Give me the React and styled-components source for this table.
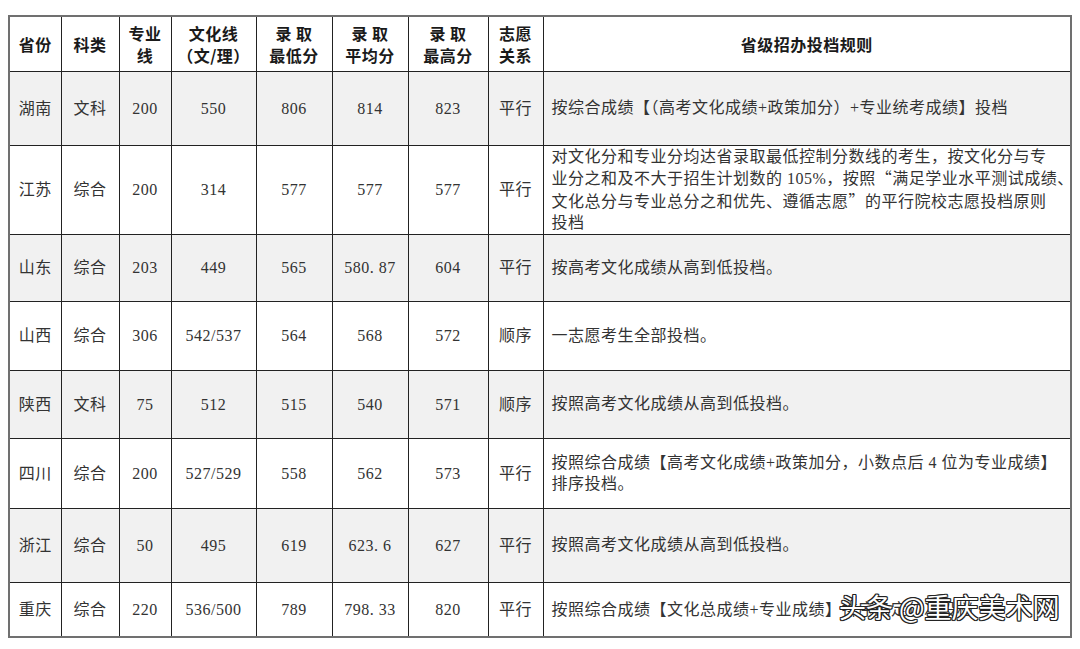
import React from "react";
import styled, { createGlobalStyle } from "styled-components";

const Global = createGlobalStyle`
  html, body { margin: 0; padding: 0; background: #ffffff; }
  body { font-family: "Liberation Serif", "Noto Sans CJK SC", serif; }
`;

const Page = styled.div`
  position: relative;
  width: 1080px;
  height: 649px;
  padding: 15px 10px 0 8px;
  box-sizing: border-box;
  background: #fff;
`;

const Table = styled.table`
  width: 1062px;
  table-layout: fixed;
  border-collapse: collapse;
  border: 2px solid #707070;
  font-size: 16px;
  letter-spacing: 0.5px;
  color: #333;
`;

const HeadRow = styled.tr`
  height: 55px;
`;

const Th = styled.th`
  border: 1px solid #222;
  font-weight: 700;
  color: #1a1a1a;
  text-align: center;
  vertical-align: middle;
  line-height: 22px;
  padding: 0;
  font-family: "Noto Sans CJK SC", sans-serif;
`;

const Row = styled.tr`
  background: ${(p) => (p.$shade ? "#f1f1f1" : "#ffffff")};
  height: ${(p) => p.$h}px;
`;

const Td = styled.td`
  border: 1px solid #222;
  text-align: center;
  vertical-align: middle;
  padding: 0;
  line-height: 21px;
  white-space: nowrap;
`;

const RuleTd = styled(Td)`
  text-align: left;
  padding: 0 2px 0 8px;
  line-height: 21.5px;
`;

const Line = styled.span`
  display: block;
  white-space: nowrap;
`;

const Cjk = styled.span`
  font-family: "Noto Sans CJK SC", sans-serif;
`;

const Watermark = styled.div`
  position: absolute;
  left: 839px;
  top: 588px;
  font-family: "Noto Sans CJK SC", sans-serif;
  font-size: 27px;
  line-height: 38px;
  color: #ffffff;
  letter-spacing: 0;
  white-space: pre;
  text-shadow: 1px 1px 0 #222, -1px -1px 0 #222, 1px -1px 0 #222, -1px 1px 0 #222,
    0 1px 0 #222, 0 -1px 0 #222, 1px 0 0 #222, -1px 0 0 #222;
`;

const cols = [52, 58, 52, 85, 76, 76, 80, 55, 528];

const rows = [
  { p: "湖南", k: "文科", z: "200", w: "550", lo: "806", avg: "814", hi: "823", rel: "平行",
    rule: [["按综合成绩【（高考文化成绩+政策加分）+专业统考成绩】投档"]], h: 74, shade: true },
  { p: "江苏", k: "综合", z: "200", w: "314", lo: "577", avg: "577", hi: "577", rel: "平行",
    rule: [
      ["对文化分和专业分均达省录取最低控制分数线的考生，按文化分与专"],
      ["业分之和及不大于招生计划数的 105%，按照", { q: "“" }, "满足学业水平测试成绩、"],
      ["文化总分与专业总分之和优先、遵循志愿", { q: "”" }, "的平行院校志愿投档原则"],
      ["投档"],
    ], h: 88 },
  { p: "山东", k: "综合", z: "203", w: "449", lo: "565", avg: "580. 87", hi: "604", rel: "平行",
    rule: [["按高考文化成绩从高到低投档。"]], h: 67, shade: true },
  { p: "山西", k: "综合", z: "306", w: "542/537", lo: "564", avg: "568", hi: "572", rel: "顺序",
    rule: [["一志愿考生全部投档。"]], h: 69 },
  { p: "陕西", k: "文科", z: "75", w: "512", lo: "515", avg: "540", hi: "571", rel: "顺序",
    rule: [["按照高考文化成绩从高到低投档。"]], h: 68, shade: true },
  { p: "四川", k: "综合", z: "200", w: "527/529", lo: "558", avg: "562", hi: "573", rel: "平行",
    rule: [["按照综合成绩【高考文化成绩+政策加分，小数点后 4 位为专业成绩】"], ["排序投档。"]], h: 70 },
  { p: "浙江", k: "综合", z: "50", w: "495", lo: "619", avg: "623. 6", hi: "627", rel: "平行",
    rule: [["按照高考文化成绩从高到低投档。"]], h: 74, shade: true },
  { p: "重庆", k: "综合", z: "220", w: "536/500", lo: "789", avg: "798. 33", hi: "820", rel: "平行",
    rule: [["按照综合成绩【文化总成绩+专业成绩】排序确定位次投档"]], h: 55 },
];

export default function App() {
  return (
    <>
      <Global />
      <Page>
        <Table>
          <colgroup>
            {cols.map((w, i) => (
              <col key={i} style={{ width: w }} />
            ))}
          </colgroup>
          <thead>
            <HeadRow>
              <Th>省份</Th>
              <Th>科类</Th>
              <Th>专业<br />线</Th>
              <Th>文化线<br />（文/理）</Th>
              <Th>录 取<br />最低分</Th>
              <Th>录 取<br />平均分</Th>
              <Th>录 取<br />最高分</Th>
              <Th>志愿<br />关系</Th>
              <Th>省级招办投档规则</Th>
            </HeadRow>
          </thead>
          <tbody>
            {rows.map((r) => (
              <Row key={r.p} $shade={r.shade} $h={r.h}>
                <Td>{r.p}</Td>
                <Td>{r.k}</Td>
                <Td>{r.z}</Td>
                <Td>{r.w}</Td>
                <Td>{r.lo}</Td>
                <Td>{r.avg}</Td>
                <Td>{r.hi}</Td>
                <Td>{r.rel}</Td>
                <RuleTd>
                  {r.rule.map((parts, i) => (
                    <Line key={i}>
                      {parts.map((s, j) =>
                        typeof s === "string" ? s : <Cjk key={j}>{s.q}</Cjk>
                      )}
                    </Line>
                  ))}
                </RuleTd>
              </Row>
            ))}
          </tbody>
        </Table>
        <Watermark>头条 @重庆美术网</Watermark>
      </Page>
    </>
  );
}
